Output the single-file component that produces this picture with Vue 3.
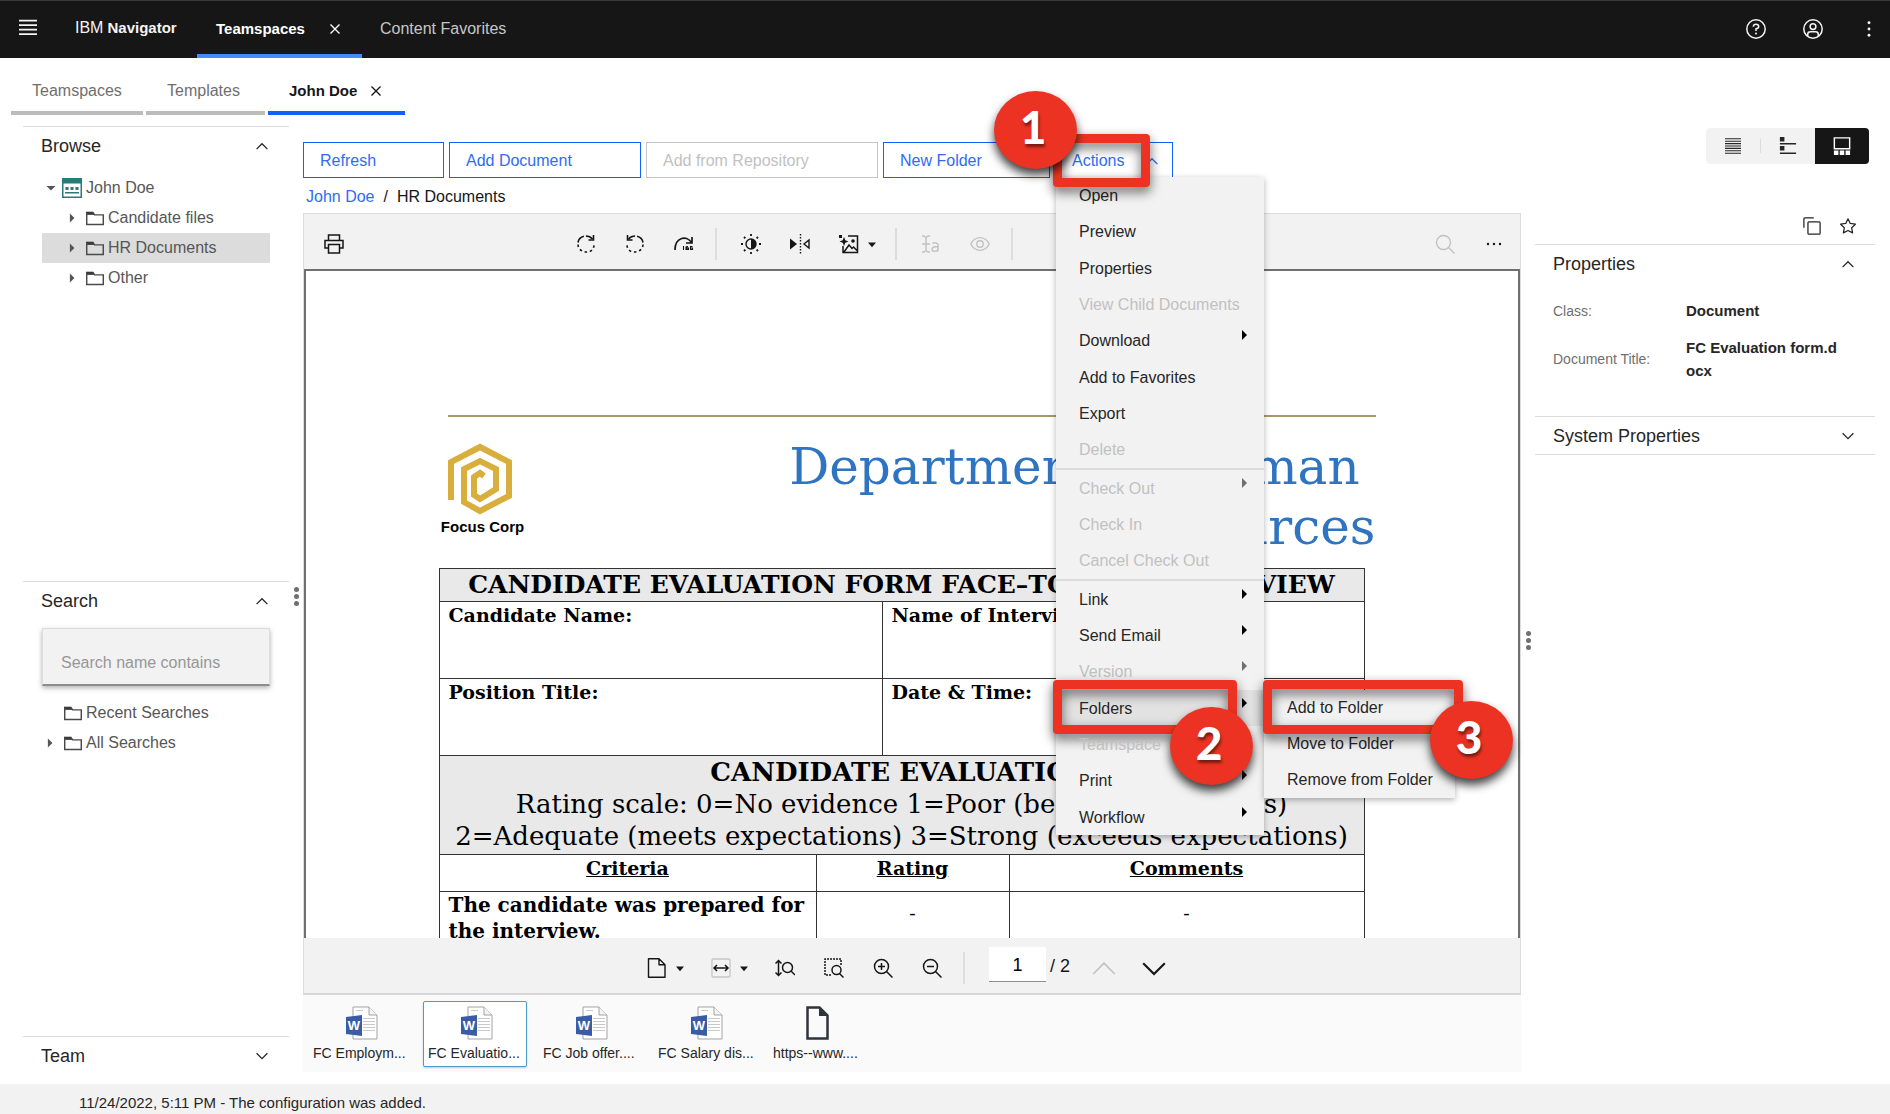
<script setup>
import { ref } from 'vue'

const S = 'fill="none" stroke="currentColor"'
const icons = {
  menu: `<path ${S} stroke-width="2" d="M0 3h20M0 8h20M0 13h20M0 18h20"/>`,
  close: `<path ${S} stroke-width="1.5" d="M5 5l10 10M15 5L5 15"/>`,
  help: `<circle cx="10" cy="10" r="9.2" ${S} stroke-width="1.5"/><path ${S} stroke-width="1.5" d="M7.4 7.8V7.4C7.4 6 8.3 5.2 10 5.2s2.700.9 2.700 2.300S11.700 9.600 10 9.800v2.200"/><circle cx="10" cy="14.600" r="1"/>`,
  user: `<circle cx="10" cy="10" r="9.200" ${S} stroke-width="1.500"/><circle cx="10" cy="7.600" r="2.900" ${S} stroke-width="1.500"/><path ${S} stroke-width="1.500" d="M4.700 17v-1.500c0-1.600 1.200-2.700 2.700-2.700h5.200c1.500 0 2.700 1.100 2.700 2.700V17"/>`,
  kebab: '<circle cx="10" cy="3" r="1.600"/><circle cx="10" cy="10" r="1.600"/><circle cx="10" cy="17" r="1.600"/>',
  up: `<path ${S} stroke-width="1.400" d="M4 13.500l6-6 6 6"/>`,
  down: `<path ${S} stroke-width="1.400" d="M4 7l6 6 6-6"/>`,
  right: '<path d="M7 3.500l6.500 6.500L7 16.500z"/>',
  expanded: '<path d="M3.500 7h13L10 13.500z"/>',
  team: '<path fill="#2a7a78" d="M0 0h20v20H0z"/><path fill="#fff" d="M1.500 5.500h17v13h-17z"/><path fill="#2a7a78" d="M3.500 9h3v3h-3zM8.500 9h3v3h-3zM13.500 9h3v3h-3zM3 14h14v1.500H3z"/>',
  folder: `<path fill="#161616" d="M0 3h8l2 3.500H0z"/><path fill="none" stroke="#4a4a4a" stroke-width="1.600" d="M.8 4.500h6.700l2 2h9.700v10.700H.8z"/>`,
  print: `<path ${S} stroke-width="1.500" d="M4.500 6V1h11v5M4.500 14H1V6.500h18V14h-3.500M4.500 10.500h11V19h-11z"/>`,
  cw: `<path ${S} stroke-width="1.600" stroke-dasharray="9 2 20" d="M2 8.500C3.200 1.500 12 0 16.500 5"/><path ${S} stroke-width="1.600" d="M17.500 1v5h-5"/><path ${S} stroke-width="1.600" stroke-dasharray="2.500 2.800" d="M2 10.500c0 9 16 11 16 0"/>`,
  ccw: `<path ${S} stroke-width="1.600" stroke-dasharray="9 2 20" d="M18 8.500C16.800 1.500 8 0 3.500 5"/><path ${S} stroke-width="1.600" d="M2.500 1v5h5"/><path ${S} stroke-width="1.600" stroke-dasharray="2.500 2.800" d="M18 10.500c0 9-16 11-16 0"/>`,
  half: `<path ${S} stroke-width="1.700" d="M1 16C1 3 13 1 17.500 8.500M18 3v6h-6"/><path ${S} stroke-width="1.100" d="M9.500 12v4M12 12.500v3.500M14 12.500h-1v3h1.500v-1.500H13M18.500 12.500h-2v3h2v-1.500h-2"/>`,
  bright: `<circle cx="10" cy="10" r="5" ${S} stroke-width="1.400"/><path d="M10 5a5 5 0 010 10z"/><path ${S} stroke-width="1.800" d="M10 0v2M10 18v2M0 10h2M18 10h2M3 3l1.400 1.400M15.600 15.600L17 17M3 17l1.400-1.400M15.600 4.400L17 3"/>`,
  flip: `<path d="M0 4.500l7 5.500-7 5.500z"/><path ${S} stroke-width="1.400" d="M19 6v8l-5-4z"/><path ${S} stroke-width="1.400" stroke-dasharray="1.500 1.500" d="M10.500 0v20"/>`,
  enhance: `<path ${S} stroke-width="1.500" d="M9 2h9.500v16.500H4V12M5 18l5-7 3 3.500 1.500-1.500 4 4"/><circle cx="14" cy="7" r="1.800"/><path d="M5 3l1.300 3.200L9.500 7.500 6.300 8.800 5 12 3.700 8.800.5 7.500l3.200-1.300zM0 1h3v3H0z"/>`,
  textsel: `<path ${S} stroke-width="1.400" d="M1 2h2l2 1.500L7 2h2M5 3.500v13M1 18h2l2-1.500L7 18h2M1 10h8"/><path ${S} stroke-width="1.400" d="M11.500 9.500c1-1 5.500-1.200 5.500 1.500v6.500M17 12.500c-3 0-6 .2-6 2.700 0 2.800 5 2.800 6 .3"/>`,
  eye: `<path ${S} stroke-width="1.400" d="M.8 10C5 1.500 15 1.500 19.200 10 15 18.500 5 18.500.8 10z"/><circle cx="10" cy="10" r="3.200" ${S} stroke-width="1.400"/>`,
  search: `<circle cx="8.500" cy="8.500" r="7" ${S} stroke-width="1.400"/><path ${S} stroke-width="1.400" d="M13.500 13.500l6 6"/>`,
  dots: '<circle cx="4" cy="10" r="1.200"/><circle cx="10" cy="10" r="1.200"/><circle cx="16" cy="10" r="1.200"/>',
  lines: `<path ${S} stroke-width="1.400" d="M0 1h20M0 4h20M0 7h20M0 10h20M0 13h20M0 16h20M0 19h20"/>`,
  list: `<path d="M1 0h5v5H1zM1 10h5v5H1z"/><path ${S} stroke-width="1.500" d="M1 7.500h18M1 18h18"/>`,
  film: `<path ${S} stroke-width="1.600" d="M1.500 1h17v12h-17z"/><path d="M1 15h5v5H1zM7.500 15h5v5h-5zM14 15h5v5h-5z"/>`,
  copy: `<path ${S} stroke-width="1.400" d="M1 12V2q0-1 1-1h10"/><rect x="5.500" y="5.500" width="13.500" height="13.500" rx="1" ${S} stroke-width="1.400"/>`,
  star: `<path ${S} stroke-width="1.400" stroke-linejoin="round" d="M10 2l2.500 5.200 5.700.8-4.100 4 1 5.700-5.100-2.700-5.100 2.700 1-5.700-4.100-4 5.700-.8z"/>`,
  page: `<path ${S} stroke-width="1.400" stroke-linejoin="round" d="M1.500.7h10.500l6 6v12.600H1.500zM12 .7v6h6"/>`,
  fitw: `<rect x="1" y="1" width="18" height="18" rx="1" fill="none" stroke="#c6c6c6" stroke-width="1.300"/><path ${S} stroke-width="1.500" d="M3 10h14M6 7l-3 3 3 3M14 7l3 3-3 3"/>`,
  fith: `<path ${S} stroke-width="1.500" d="M3.500 3v14M.5 5.500l3-3 3 3M.5 14.500l3 3 3-3"/><circle cx="12.500" cy="9.500" r="5" ${S} stroke-width="1.500"/><path ${S} stroke-width="1.500" d="M16 13l4 4"/>`,
  region: `<path ${S} stroke-width="1.500" stroke-dasharray="2 1" d="M17 7V1H1v16h7"/><circle cx="12.500" cy="12" r="4.500" ${S} stroke-width="1.500"/><path ${S} stroke-width="1.500" d="M15.500 15.500l4 4"/>`,
  zin: `<circle cx="8.500" cy="8.500" r="7" ${S} stroke-width="1.500"/><path ${S} stroke-width="1.500" d="M13.500 13.500l6 6M5 8.500h7M8.500 5v7"/>`,
  zout: `<circle cx="8.500" cy="8.500" r="7" ${S} stroke-width="1.500"/><path ${S} stroke-width="1.500" d="M13.500 13.500l6 6M5 8.500h7"/>`,
  caret: '<path d="M0 6h20l-10 12z"/>',
  pup: `<path ${S} stroke-width="1.300" d="M1 15l9-9 9 9"/>`,
  pdown: `<path ${S} stroke-width="1.800" d="M1 6l9 9 9-9"/>`
}

const folders = [
  { label: 'Candidate files' },
  { label: 'HR Documents', selected: true },
  { label: 'Other' }
]
const menu = [
  { label: 'Open' },
  { label: 'Preview' },
  { label: 'Properties' },
  { label: 'View Child Documents', off: true },
  { label: 'Download', sub: true },
  { label: 'Add to Favorites' },
  { label: 'Export' },
  { label: 'Delete', off: true },
  { rule: true },
  { label: 'Check Out', off: true, sub: true },
  { label: 'Check In', off: true },
  { label: 'Cancel Check Out', off: true },
  { rule: true },
  { label: 'Link', sub: true },
  { label: 'Send Email', sub: true },
  { label: 'Version', off: true, sub: true },
  { label: 'Folders', sub: true, open: true },
  { label: 'Teamspace', off: true },
  { label: 'Print', sub: true },
  { label: 'Workflow', sub: true }
]
const submenu = ['Add to Folder', 'Move to Folder', 'Remove from Folder']
const files = [
  { label: 'FC Employm...', word: true },
  { label: 'FC Evaluatio...', word: true, selected: true },
  { label: 'FC Job offer....', word: true },
  { label: 'FC Salary dis...', word: true },
  { label: 'https--www....' }
]
const page = ref('1')
const query = ref('')
</script>

<template>
  <div class="app">
    <header class="top">
      <button class="burger" aria-label="Menu"><svg class="i20" viewBox="0 0 20 20" v-html="icons.menu" /></button>
      <a href="#" class="brand">IBM <b>Navigator</b></a>
      <a href="#" class="toptab on">Teamspaces <svg class="i18" viewBox="0 0 20 20" v-html="icons.close" /></a>
      <a href="#" class="toptab">Content Favorites</a>
      <div class="topicons">
        <button aria-label="Help"><svg class="i20" viewBox="0 0 20 20" v-html="icons.help" /></button>
        <button aria-label="User"><svg class="i20" viewBox="0 0 20 20" v-html="icons.user" /></button>
        <button aria-label="More"><svg class="i18" viewBox="0 0 20 20" v-html="icons.kebab" /></button>
      </div>
    </header>

    <nav class="tabs">
      <a href="#" class="tab t1">Teamspaces</a>
      <a href="#" class="tab t2">Templates</a>
      <a href="#" class="tab t3 on">John Doe <svg class="i18" viewBox="0 0 20 20" v-html="icons.close" /></a>
    </nav>

    <div class="body">
      <aside class="left">
        <section class="panel grow">
          <h2>Browse <button aria-label="Collapse Browse"><svg class="i18" viewBox="0 0 20 20" v-html="icons.up" /></button></h2>
          <ul class="tree browse">
            <li class="row root">
              <svg class="i14" viewBox="0 0 20 20" v-html="icons.expanded" />
              <svg class="i20" viewBox="0 0 20 20" v-html="icons.team" />John Doe
            </li>
            <li v-for="f in folders" :key="f.label" class="row child" :class="{ sel: f.selected }">
              <svg class="i14" viewBox="0 0 20 20" v-html="icons.right" />
              <svg class="i18" viewBox="0 0 20 20" v-html="icons.folder" />{{ f.label }}
            </li>
          </ul>
        </section>
        <section class="panel grow">
          <h2>Search <button aria-label="Collapse Search"><svg class="i18" viewBox="0 0 20 20" v-html="icons.up" /></button></h2>
          <input v-model="query" class="find" type="text" placeholder="Search name contains" aria-label="Search name contains">
          <ul class="tree">
            <li class="row srch">
              <span class="i14" />
              <svg class="i18" viewBox="0 0 20 20" v-html="icons.folder" />Recent Searches
            </li>
            <li class="row srch">
              <svg class="i14" viewBox="0 0 20 20" v-html="icons.right" />
              <svg class="i18" viewBox="0 0 20 20" v-html="icons.folder" />All Searches
            </li>
          </ul>
        </section>
        <section class="panel">
          <h2>Team <button aria-label="Expand Team"><svg class="i18" viewBox="0 0 20 20" v-html="icons.down" /></button></h2>
        </section>
      </aside>

      <div class="grip"><i /><i /><i /></div>

      <main class="center">
        <div class="actions">
          <button class="btn refresh">Refresh</button>
          <button class="btn adddoc">Add Document</button>
          <button class="btn addrepo" disabled>Add from Repository</button>
          <button class="btn newf">New Folder</button>
          <div class="drop">
            <button class="btn act">Actions <svg class="i18" viewBox="0 0 20 20" v-html="icons.up" /></button>
            <div class="menu">
              <template v-for="(m, n) in menu" :key="n">
                <hr v-if="m.rule">
                <div v-else class="entry" :class="{ open: m.open }">
                  <button class="item" :disabled="m.off">
                    {{ m.label }}
                    <svg v-if="m.sub" class="arrow" viewBox="0 0 5 10"><path d="M0 0l5 5-5 5z" /></svg>
                  </button>
                  <template v-if="m.open">
                    <div class="submenu">
                      <button v-for="s in submenu" :key="s" class="item">{{ s }}</button>
                    </div>
                    <span class="mark mark2" />
                    <span class="mark mark3" />
                    <span class="step step2">2</span>
                    <span class="step step3">3</span>
                  </template>
                </div>
              </template>
            </div>
            <span class="mark mark1" />
            <span class="step step1">1</span>
          </div>
        </div>

        <div class="crumbs"><a href="#">John Doe</a><span>/</span><span>HR Documents</span></div>

        <div class="viewer">
          <div class="bar topbar">
            <button aria-label="Print document"><svg class="i20" viewBox="0 0 20 20" v-html="icons.print" /></button>
            <div class="mid">
              <button aria-label="Rotate clockwise"><svg class="i20" viewBox="0 0 20 20" v-html="icons.cw" /></button>
              <button aria-label="Rotate counterclockwise"><svg class="i20" viewBox="0 0 20 20" v-html="icons.ccw" /></button>
              <button aria-label="Rotate 180"><svg class="i20" viewBox="0 0 20 20" v-html="icons.half" /></button>
              <i class="sep" />
              <button aria-label="Brightness"><svg class="i20" viewBox="0 0 20 20" v-html="icons.bright" /></button>
              <button aria-label="Mirror"><svg class="i20" viewBox="0 0 20 20" v-html="icons.flip" /></button>
              <button class="wide" aria-label="Enhance"><svg class="i20" viewBox="0 0 20 20" v-html="icons.enhance" /><svg class="i8" viewBox="0 0 20 20" v-html="icons.caret" /></button>
              <i class="sep" />
              <button class="dim" aria-label="Select text"><svg class="i20" viewBox="0 0 20 20" v-html="icons.textsel" /></button>
              <button class="dim" aria-label="Show annotations"><svg class="i20" viewBox="0 0 20 20" v-html="icons.eye" /></button>
              <i class="sep" />
            </div>
            <button class="dim find-btn" aria-label="Find"><svg class="i20" viewBox="0 0 20 20" v-html="icons.search" /></button>
            <button aria-label="More tools"><svg class="i20" viewBox="0 0 20 20" v-html="icons.dots" /></button>
          </div>

          <div class="canvas">
            <article class="doc">
              <div class="goldline" />
              <div class="masthead">
                <div class="logo">
                  <svg viewBox="0 0 64 72"><path fill="none" stroke="#d8ae3c" stroke-width="6" d="M3 57V19L32 4l29 15v34L32 68 16 59V26l16-8 16 8v20l-16 10-6-4V34l6-4 4 3" /></svg>
                  <span>Focus Corp</span>
                </div>
                <h1>Department of Human&nbsp;<br>Resources</h1>
              </div>
              <table>
                <colgroup><col class="c1"><col class="c2"><col class="c3"><col></colgroup>
                <tbody>
                  <tr class="r1"><th colspan="4" class="shade">CANDIDATE EVALUATION FORM FACE–TO–FACE INTERVIEW</th></tr>
                  <tr class="r2"><th colspan="2">Candidate Name:</th><th colspan="2">Name of Interviewer:</th></tr>
                  <tr class="r2"><th colspan="2">Position Title:</th><th colspan="2">Date &amp; Time:</th></tr>
                  <tr class="r3"><td colspan="4" class="shade"><b>CANDIDATE EVALUATION</b><br>Rating scale: 0=No evidence 1=Poor (below expectations)<br>2=Adequate (meets expectations) 3=Strong (exceeds expectations)</td></tr>
                  <tr class="r4"><th><u>Criteria</u></th><th colspan="2"><u>Rating</u></th><th><u>Comments</u></th></tr>
                  <tr class="r5"><th>The candidate was prepared for<br>the interview.</th><td colspan="2">-</td><td>-</td></tr>
                </tbody>
              </table>
            </article>
          </div>

          <div class="bar botbar">
            <button class="wide" aria-label="Page layout"><svg class="i20" viewBox="0 0 20 20" v-html="icons.page" /><svg class="i8" viewBox="0 0 20 20" v-html="icons.caret" /></button>
            <button class="wide" aria-label="Fit width"><svg class="i20" viewBox="0 0 20 20" v-html="icons.fitw" /><svg class="i8" viewBox="0 0 20 20" v-html="icons.caret" /></button>
            <button aria-label="Fit height"><svg class="i20" viewBox="0 0 20 20" v-html="icons.fith" /></button>
            <button aria-label="Zoom to region"><svg class="i20" viewBox="0 0 20 20" v-html="icons.region" /></button>
            <button aria-label="Zoom in"><svg class="i20" viewBox="0 0 20 20" v-html="icons.zin" /></button>
            <button aria-label="Zoom out"><svg class="i20" viewBox="0 0 20 20" v-html="icons.zout" /></button>
            <i class="sep" />
            <input v-model="page" class="pageno" type="text" aria-label="Page number"><span class="total">/ 2</span>
            <button class="dim" aria-label="Previous page"><svg class="i24" viewBox="0 0 20 20" v-html="icons.pup" /></button>
            <button aria-label="Next page"><svg class="i24" viewBox="0 0 20 20" v-html="icons.pdown" /></button>
          </div>
        </div>

        <div class="strip">
          <button v-for="f in files" :key="f.label" class="thumb" :class="{ sel: f.selected }">
            <svg v-if="f.word" class="word" viewBox="0 0 32 34">
              <path fill="#fff" stroke="#a3a3a3" d="M7 1h16l8 8v24H7z" />
              <path fill="#f4f4f4" stroke="#a3a3a3" d="M23 1v8h8" />
              <path stroke="#c9c9c9" d="M17 12.500h12M17 15.500h12M17 18.500h12M17 21.500h12M17 24.500h12M10 4.500h7" />
              <path fill="#3a5ba5" d="M0 11l16-2v21L0 28z" />
              <text x="8" y="24" fill="#fff" font-family="Liberation Sans, sans-serif" font-weight="700" font-size="13" text-anchor="middle">W</text>
            </svg>
            <svg v-else class="word" viewBox="0 0 32 34">
              <path fill="none" stroke="#32323c" stroke-width="2.500" d="M1.500 1.500h12l8 8v23h-20z" />
              <path fill="#32323c" d="M13 1v9h9z" />
            </svg>
            <span>{{ f.label }}</span>
          </button>
        </div>
      </main>

      <div class="grip low"><i /><i /><i /></div>

      <aside class="right">
        <div class="views">
          <button aria-label="Detail view"><svg class="i16" viewBox="0 0 20 20" v-html="icons.lines" /></button>
          <i />
          <button aria-label="List view"><svg class="i18" viewBox="0 0 20 20" v-html="icons.list" /></button>
          <button class="on" aria-label="Filmstrip view"><svg class="i18" viewBox="0 0 20 20" v-html="icons.film" /></button>
        </div>
        <div class="tools">
          <button aria-label="Copy"><svg class="i18" viewBox="0 0 20 20" v-html="icons.copy" /></button>
          <button aria-label="Favorite"><svg class="i18" viewBox="0 0 20 20" v-html="icons.star" /></button>
        </div>
        <section class="props">
          <h2>Properties <button aria-label="Collapse Properties"><svg class="i18" viewBox="0 0 20 20" v-html="icons.up" /></button></h2>
          <dl>
            <dt>Class:</dt><dd>Document</dd>
            <dt>Document Title:</dt><dd>FC Evaluation form.docx</dd>
          </dl>
        </section>
        <section class="props last">
          <h2>System Properties <button aria-label="Expand System Properties"><svg class="i18" viewBox="0 0 20 20" v-html="icons.down" /></button></h2>
        </section>
      </aside>
    </div>

    <footer>11/24/2022, 5:11 PM - The configuration was added.</footer>
  </div>
</template>

<style>
body { margin: 0; }
</style>

<style scoped>
* { box-sizing: border-box; }
.app {
  height: 100vh;
  display: flex;
  flex-direction: column;
  overflow: hidden;
  background: #fff;
  color: #262626;
  font: 16px/20px "Liberation Sans", Arial, sans-serif;
}
button { font: inherit; color: inherit; background: none; border: 0; padding: 0; margin: 0; display: flex; align-items: center; }
a { color: inherit; text-decoration: none; }
ul { list-style: none; margin: 0; padding: 0; }
svg { display: block; flex: none; fill: currentColor; }
.i8 { width: 8px; height: 8px; }
.i14 { width: 14px; height: 14px; flex: none; }
.i16 { width: 16px; height: 16px; }
.i18 { width: 18px; height: 18px; }
.i20 { width: 20px; height: 20px; }
.i24 { width: 24px; height: 24px; }

.top { flex: none; height: 58px; background: #161616; color: #f4f4f4; display: flex; align-items: stretch; border-top: 1px solid #393939; }
.burger { padding: 0 0 6px 18px; }
.burger svg { height: 18px; }
.brand { margin-left: 37px; width: 122px; padding-bottom: 4px; display: flex; align-items: center; gap: 4px; }
.brand b { font-size: 15px; }
.toptab { display: flex; align-items: center; gap: 21px; padding: 0 18px 2px; color: #c6c6c6; }
.toptab.on { width: 165px; color: #fff; font-weight: 700; font-size: 15px; border-bottom: 4px solid #4589ff; padding: 2px 0 0 19px; }
.topicons { margin-left: auto; display: flex; gap: 37px; padding: 0 12px 2px 0; }

.tabs { flex: none; height: 57px; display: flex; gap: 3px; padding-left: 11px; }
.tab { display: flex; align-items: center; gap: 10px; padding: 12px 0 0 21px; border-bottom: 4px solid #bcbcbc; color: #6f6f6f; }
.t1 { width: 132px; }
.t2 { width: 119px; }
.t3 { width: 137px; }
.tab.on { font-weight: 700; font-size: 15px; color: #161616; border-color: #0f62fe; }

.body { flex: 1; min-height: 0; display: grid; grid-template-columns: 289px 14px minmax(0, 1fr) 14px 355px; grid-template-rows: minmax(0, 1fr); padding-bottom: 12px; }

.left { display: flex; flex-direction: column; padding: 11px 0 0 23px; min-height: 0; }
.panel { border-top: 1px solid #dcdcdc; height: 36px; }
.panel.grow { flex: 1; }
h2 { margin: 0; font-weight: 400; font-size: 18px; line-height: 20px; height: 38px; display: flex; align-items: center; justify-content: space-between; padding: 0 18px; }
.tree { color: #565656; }
.browse { padding-top: 8px; }
.row { height: 30px; display: flex; align-items: center; gap: 4px; margin: 0 19px; }
.child { padding-left: 23px; }
.child .i18, .srch .i18 { margin-left: 3px; }
.root { padding-left: 2px; }
.srch { padding-left: 1px; }
.sel.row { background: #dcdcdc; }
.find { display: block; width: 228px; height: 58px; margin: 8px 19px 12px; padding: 12px 18px 0; border: 1px solid #dcdcdc; border-bottom: 2px solid #8d8d8d; background: #f2f2f2; font: inherit; box-shadow: 0 2px 5px rgba(0, 0, 0, .3); border-radius: 0; }
.find::placeholder { color: #979797; opacity: 1; }

.grip { display: flex; flex-direction: column; align-items: center; justify-content: center; gap: 2px; margin-top: 5px; }
.grip i { width: 5px; height: 5px; border-radius: 50%; background: #6f6f6f; }
.grip.low { margin-top: 94px; }

.center { display: flex; flex-direction: column; min-width: 0; min-height: 0; }
.actions { display: flex; gap: 5px; padding-top: 27px; position: relative; z-index: 2; }
.btn { height: 36px; border: 1px solid #0f62fe; color: #2f6bf5; padding: 1px 0 0 16px; background: #fff; }
.btn:disabled { border-color: #c6c6c6; color: #c1c1c1; }
.refresh { width: 141px; }
.adddoc { width: 192px; }
.addrepo { width: 232px; }
.newf { width: 167px; }
.act { width: 118px; justify-content: space-between; padding-right: 11px; }
.drop { position: relative; }
.menu { position: absolute; top: 35px; left: 1px; width: 208px; height: 658px; background: #f2f2f2; box-shadow: 0 2px 6px rgba(0, 0, 0, .3); display: flex; flex-direction: column; }
.menu hr { width: 100%; height: 2px; border: 0; margin: 0; background: #dcdcdc; flex: none; }
.entry { flex: 1; display: flex; position: relative; }
.entry.open { background: #e2e2e2; }
.item { width: 100%; padding: 2px 17px 0 23px; justify-content: space-between; white-space: nowrap; }
.item:disabled { color: #c1c1c1; }
.arrow { width: 5px; height: 10px; margin-bottom: 12px; fill: #000; }
.item:disabled .arrow { fill: #6f6f6f; }
.submenu { position: absolute; left: 208px; top: 0; width: 191px; height: 108px; background: #f2f2f2; box-shadow: 0 2px 6px rgba(0, 0, 0, .3); display: flex; flex-direction: column; }
.submenu .item { flex: 1; padding-top: 0; }
.mark { position: absolute; border: 9px solid #ec3323; border-radius: 4px; filter: drop-shadow(0 5px 6px rgba(0, 0, 0, .6)); pointer-events: none; }
.mark1 { left: -2px; top: -8px; width: 97px; height: 53px; }
.mark2 { left: -3px; top: -10px; width: 184px; height: 54px; }
.mark3 { left: 207px; top: -10px; width: 200px; height: 54px; }
.step { position: absolute; width: 83px; height: 78px; padding-right: 5px; border-radius: 50%; background: #ec3323; color: #fff; font: 900 46px/72px Lato, sans-serif; text-align: center; text-shadow: 1px 3px 3px rgba(0, 0, 0, .5); box-shadow: 0 6px 10px rgba(0, 0, 0, .75); }
.step1 { left: -61px; top: -51px; }
.step2 { left: 114px; top: 17px; }
.step3 { left: 374px; top: 11px; }

.crumbs { height: 35px; flex: none; display: flex; align-items: center; gap: 9px; padding: 2px 0 0 3px; color: #161616; }
.crumbs a { color: #2f6bf5; }

.viewer { flex: 1; min-height: 0; display: flex; flex-direction: column; border: 1px solid #dcdcdc; border-bottom: 2px solid #d6d6d6; }
.bar { flex: none; background: #f2f2f2; display: flex; align-items: center; color: #161616; }
.topbar { height: 55px; padding: 5px 16px 0 20px; }
.mid { display: flex; align-items: center; gap: 29px; margin-left: 232px; }
.wide { gap: 9px; margin-right: -2px; }
.dim { color: #c1c1c1; }
.sep { width: 2px; height: 32px; background: #dcdcdc; margin: 0 -5px 0 -8px; }
.find-btn { margin-left: auto; margin-right: 29px; }
.canvas { flex: 1; min-height: 0; overflow: hidden; border: 2px solid #6f6f6f; border-bottom: 0; background: #fff; }
.botbar { height: 55px; padding: 4px 0 0 343px; gap: 29px; }
.pageno { width: 57px; height: 35px; border: 0; border-bottom: 1px solid #8d8d8d; background: #fff; font: 18px/20px "Liberation Sans", sans-serif; text-align: center; padding: 2px 0 0; margin-top: -6px; }
.total { font-size: 18px; margin: -4px -7px 0 -25px; white-space: nowrap; }
.botbar .dim { margin-right: -3px; }

.doc { width: 947px; margin: 0 auto; padding: 144px 10px 0 0; color: #000; font-family: "DejaVu Serif", serif; }
.goldline { height: 2px; margin-left: 9px; background: #a8976c; }
.masthead { display: flex; justify-content: space-between; height: 151px; }
.logo { width: 86px; margin: 26px 0 0 1px; display: flex; flex-direction: column; font: 700 15px/20px "Liberation Sans", sans-serif; text-align: center; }
.logo svg { width: 64px; height: 72px; margin: 0 0 2px 8px; }
h1 { margin: 20px 0 0; font-weight: 400; font-size: 50px; line-height: 60px; color: #2f74c0; text-align: right; white-space: nowrap; }
table { width: 926px; border-collapse: collapse; table-layout: fixed; white-space: nowrap; }
.c1 { width: 377px; }
.c2 { width: 66px; }
.c3 { width: 127px; }
th, td { border: 1px solid #333; padding: 0 9px; vertical-align: top; text-align: left; font-size: 19px; line-height: 26px; }
.shade { background: #e9e9e9; padding: 0; text-align: center; line-height: 32px; }
.r1 { height: 33px; }
.r1 th { font-size: 25px; }
.r2 { height: 77px; }
.r3 { height: 99px; }
.r3 td { font-size: 26px; }
.r4 { height: 37px; }
.r5 { height: 60px; }
.r4 th { text-align: center; }
.r5 th { font-size: 20px; }
.r5 td { text-align: center; line-height: 42px; }

.strip { flex: none; height: 77px; background: #fafafa; display: flex; gap: 11px; padding: 6px 5px; }
.thumb { width: 104px; height: 66px; flex: none; flex-direction: column; align-items: flex-start; gap: 3px; padding: 4px 0 0 4px; border: 1px solid transparent; border-radius: 2px; font-size: 14px; white-space: nowrap; }
.thumb.sel { background: #fff; border-color: #4a9cc9; box-shadow: 0 1px 2px rgba(0, 0, 0, .2); }
.word { width: 32px; height: 34px; margin-left: 33px; }

.right { padding: 13px 15px 0 0; }
.views { display: flex; align-items: center; width: 163px; height: 36px; margin: 0 6px 0 auto; background: #f2f2f2; border-radius: 4px; overflow: hidden; }
.views button { flex: 1; height: 36px; justify-content: center; }
.views i { width: 1px; height: 14px; background: #dcdcdc; }
.views .on { background: #161616; color: #fff; }
.tools { height: 80px; display: flex; justify-content: flex-end; gap: 18px; padding: 53px 18px 0 0; }
.tools button { height: 18px; }
.props { border-top: 1px solid #dcdcdc; }
.props.last { border-bottom: 1px solid #dcdcdc; }
.props h2 { height: 37px; }
dl { margin: 0; height: 134px; padding: 17px 18px 0; display: grid; grid-template-columns: 133px 155px; align-content: start; align-items: center; row-gap: 14px; }
dt { font-size: 14px; color: #6f6f6f; }
dd { margin: 0; font-weight: 700; font-size: 15px; line-height: 23px; word-break: break-all; }

footer { flex: none; height: 30px; background: #f2f2f2; padding: 9px 79px 0; font-size: 15px; line-height: 20px; }
</style>
